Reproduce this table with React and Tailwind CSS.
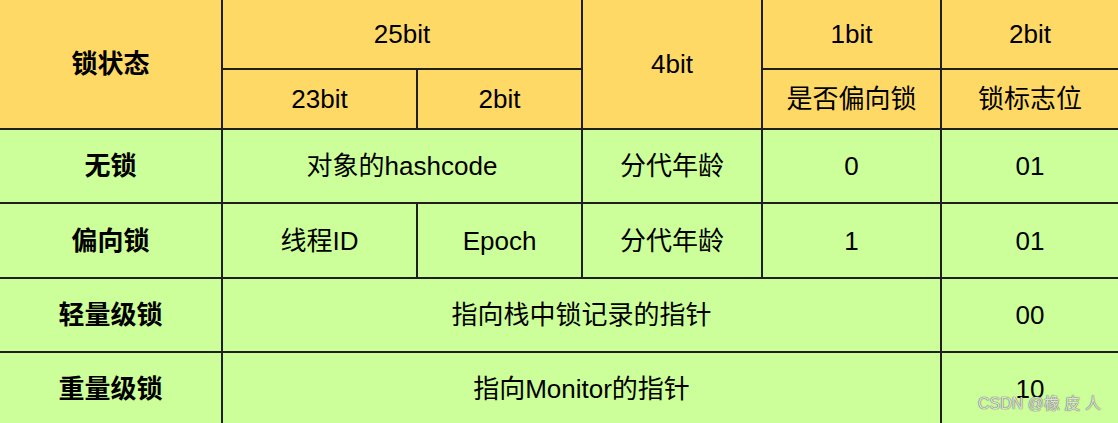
import React from "react";

const font = { fontFamily: '"Liberation Sans", "Noto Sans CJK SC", sans-serif' };

const head = "bg-[#ffd966] flex items-center justify-center";
const body = "bg-[#ccff99] flex items-center justify-center";

const rows = [
  { name: "无锁", cells: [["对象的hashcode", "col-span-2"], ["分代年龄"], ["0"], ["01"]] },
  { name: "偏向锁", cells: [["线程ID"], ["Epoch"], ["分代年龄"], ["1"], ["01"]] },
  { name: "轻量级锁", cells: [["指向栈中锁记录的指针", "col-span-4"], ["00"]] },
  { name: "重量级锁", cells: [["指向Monitor的指针", "col-span-4"], ["10"]] },
];

export default function App() {
  return (
    <div className="relative w-[1118px] h-[423px] overflow-hidden bg-[#ccff99]" style={font}>
      <div className="grid grid-cols-[221px_193px_163px_178px_177px_1fr] grid-rows-[68px_58px_72px_73px_72px_72px] gap-[2px] bg-[#1f1f1f] text-[26px] leading-none text-black">
        <div className={`${head} row-span-2 font-bold`}>锁状态</div>
        <div className={`${head} col-span-2`}>25bit</div>
        <div className={`${head} row-span-2`}>4bit</div>
        <div className={head}>1bit</div>
        <div className={head}>2bit</div>
        <div className={head}>23bit</div>
        <div className={head}>2bit</div>
        <div className={head}>是否偏向锁</div>
        <div className={head}>锁标志位</div>

        {rows.map((row) => (
          <React.Fragment key={row.name}>
            <div className={`${body} font-bold`}>{row.name}</div>
            {row.cells.map(([text, span], i) => (
              <div key={i} className={`${body} ${span || ""}`}>
                {text}
              </div>
            ))}
          </React.Fragment>
        ))}
      </div>

      {/* csdn watermark */}
      <div className="absolute left-[978px] top-[396px] text-[16px] leading-none text-white/80 [text-shadow:0_0_1px_#555,0_0_1px_#555]">
        CSDN @橡 皮 人
      </div>
    </div>
  );
}
